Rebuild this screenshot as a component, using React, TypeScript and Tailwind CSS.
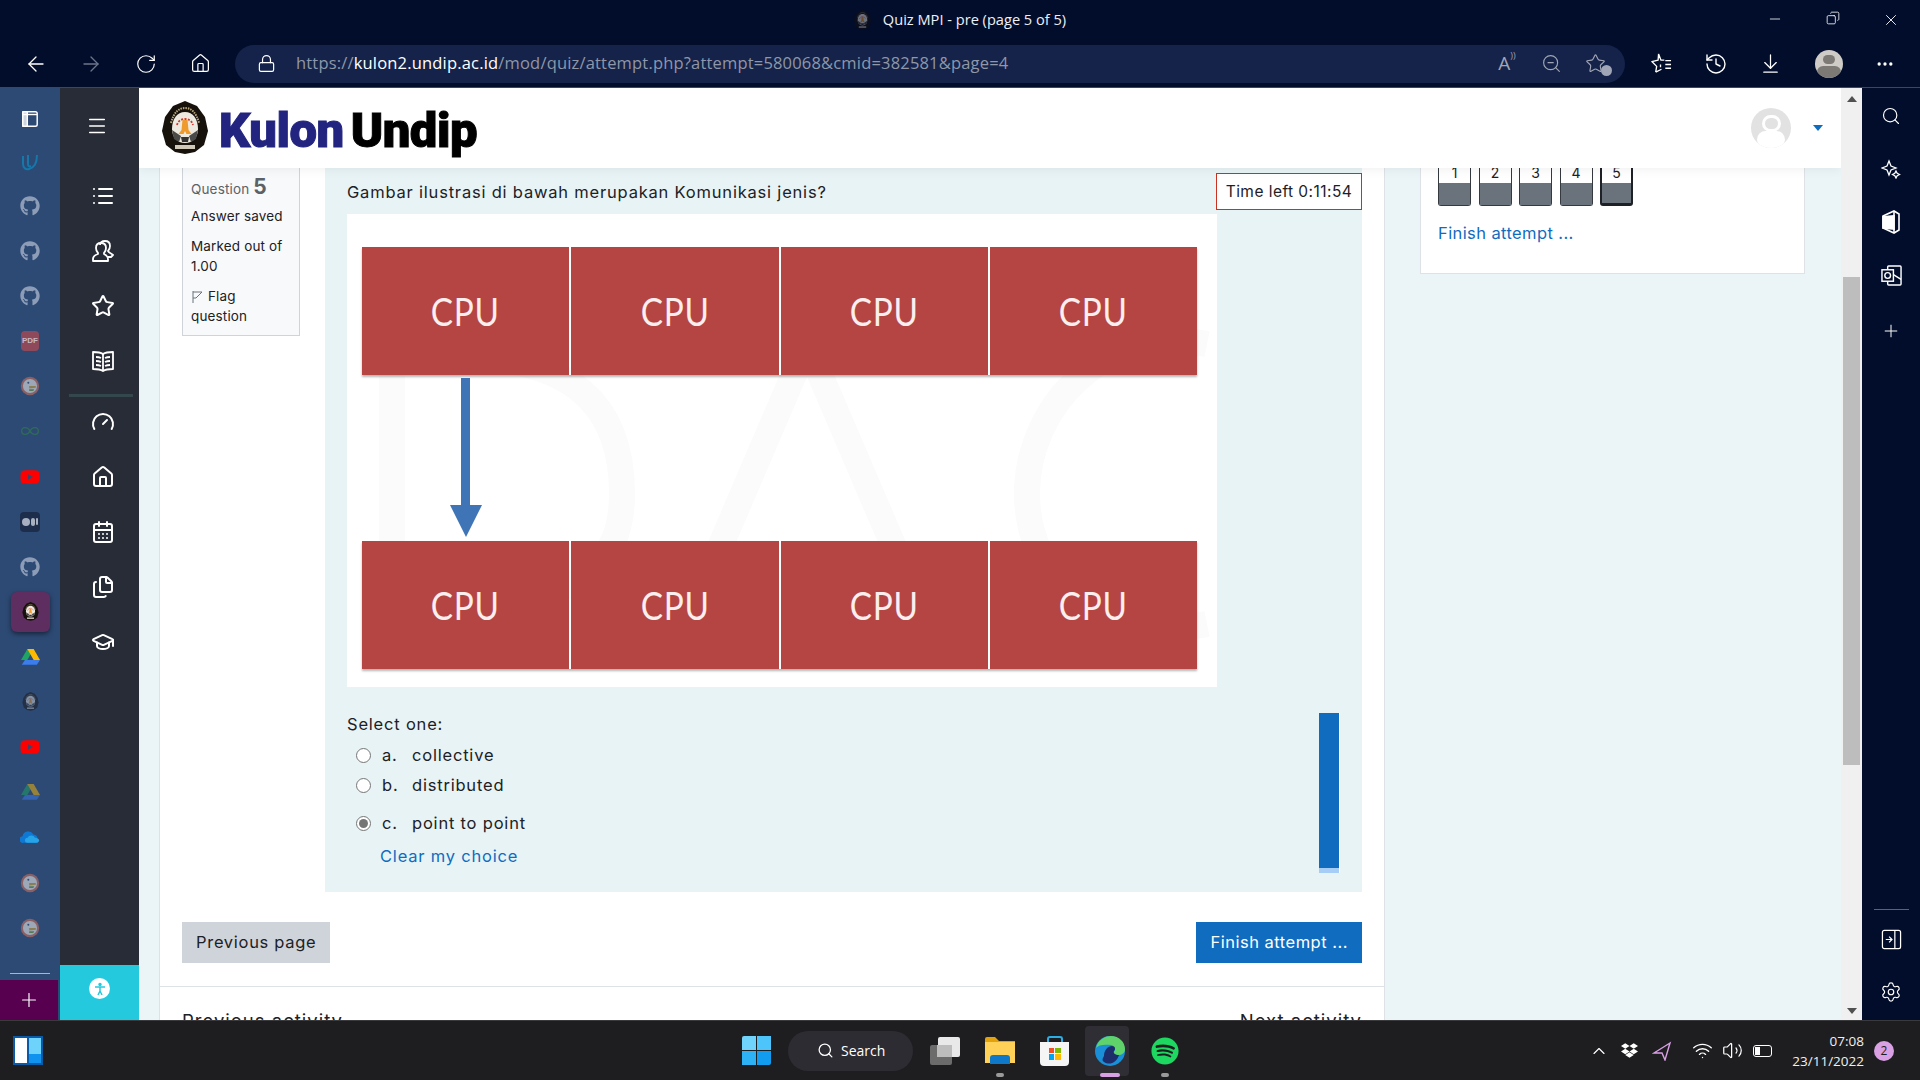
import {
  ArrowDownToLine,
  ArrowLeft,
  ArrowRight,
  CalendarDays,
  ChevronUp,
  Copy,
  Ellipsis,
  Files,
  Gauge,
  GraduationCap,
  History,
  Home,
  List,
  Lock,
  Menu,
  Minus,
  Plus,
  RotateCw,
  Search,
  Settings,
  Star,
  Volume2,
  Wifi,
  X,
  ZoomOut,
} from "lucide-react";
import { FaDropbox, FaGithub, FaSpotify, FaYoutube } from "react-icons/fa";

const Emblem = ({ className = "", dim = false }: { className?: string; dim?: boolean }) => (
  <svg viewBox="0 0 46 54" className={className} style={{ opacity: dim ? 0.45 : 1 }}>
    <path d="M23 0 35 5l8 11 3 14-4 14-9 7-10 2-10-2-9-7-4-14 3-14 8-11Z" fill="#17110c" />
    <path d="M9 22C12 11 17 7 23 7s11 4 14 15" fill="none" stroke="#b9a77c" strokeWidth="2" strokeDasharray="1.5 1" />
    <path d="M23 11c8 0 13 7 13 17 0 8-5 14-13 14S10 36 10 28c0-10 5-17 13-17Z" fill="#efeadf" />
    <path d="M15 24c2-8 14-8 16 0" fill="none" stroke="#d8352a" strokeWidth="1.8" strokeDasharray="2 1.4" />
    <path d="M20.5 19h5l1 10 3 4h-5l-1.5-3-1.5 3h-5l3-4Z" fill="#ef9a2d" />
    <path d="M10 29l9 6-2 6-5-3ZM36 29l-9 6 2 6 5-3Z" fill="#4a4a48" />
    <path d="M19 36h8l-1 5h-6Z" fill="#333" />
    <rect x="13" y="44" width="20" height="4" fill="#cfc8b8" />
  </svg>
);

const Duck = () => (
  <svg viewBox="0 0 24 24" className="w-[20px] h-[20px] opacity-60">
    <circle cx="12" cy="12" r="11" fill="#c9705c" />
    <circle cx="12" cy="12" r="8.5" fill="#e6e6e6" />
    <path d="M11 12h8v2l-8 1Z" fill="#c9a23c" />
    <path d="M11 16h6l-1 2h-5Z" fill="#6b9a4a" />
    <circle cx="10" cy="8" r="1.2" fill="#34507a" />
  </svg>
);

const Drive = ({ dim = false }: { dim?: boolean }) => (
  <svg viewBox="0 0 24 21" className={dim ? "w-[19px] h-[17px] opacity-50" : "w-[19px] h-[17px]"}>
    <path d="M8 1h8L8 15H0Z" fill="#1fa463" />
    <path d="M16 1l8 14h-8L8 1Z" fill="#ffba00" />
    <path d="M5 15h19l-4 6H1Z" fill="#3b7ded" />
  </svg>
);

const railItems: { h: number; node: React.ReactNode }[] = [
  { h: 43, node: <svg viewBox="0 0 20 20" className="w-[18px] h-[18px]" fill="none" stroke="#fff" strokeWidth="1.6"><rect x="2" y="2" width="16" height="16" rx="2" /><rect x="2" y="2" width="5" height="16" fill="#cdd5df" /><path d="M2 5h16" /></svg> },
  { h: 44, node: <svg viewBox="0 0 20 20" className="w-[20px] h-[20px]" fill="none" stroke="#1677a8" strokeWidth="2"><path d="M3 4v8c0 4 3 6 6 5 4-1 8-5 8-14" /><path d="M8 3v9c0 2 1 3 3 2" /></svg> },
  { h: 44, node: <FaGithub className="w-[20px] h-[20px] text-[#8d9db8]" /> },
  { h: 45, node: <FaGithub className="w-[20px] h-[20px] text-[#8d9db8]" /> },
  { h: 45, node: <FaGithub className="w-[20px] h-[20px] text-[#8d9db8]" /> },
  { h: 45, node: <div className="w-[18px] h-[20px] flex items-center justify-center rounded-sm bg-[#8e4a5a] text-[8px] font-bold text-[#c9b8c4] font-['Liberation_Sans',sans-serif]">PDF</div> },
  { h: 45, node: <Duck /> },
  { h: 46, node: <svg viewBox="0 0 24 12" className="w-[20px] h-[10px]" fill="none" stroke="#2f6b58" strokeWidth="1.6"><path d="M12 6c-3-6-10-5-10 0s7 6 10 0c3 6 10 5 10 0s-7-6-10 0Z" /></svg> },
  { h: 45, node: <FaYoutube className="w-[20px] h-[20px] text-[#ff0000]" /> },
  { h: 45, node: <div className="w-[20px] h-[20px] flex items-center justify-center gap-px rounded-sm bg-[#1d2e4d]"><span className="w-[8px] h-[8px] rounded-full bg-[#a7b0c0]" /><span className="w-[4px] h-[8px] rounded-full bg-[#a7b0c0]" /><span className="w-[2px] h-[7px] rounded-full bg-[#a7b0c0]" /></div> },
  { h: 45, node: <FaGithub className="w-[20px] h-[20px] text-[#8d9db8]" /> },
  { h: 45, node: <div className="w-[39px] h-[40px] flex items-center justify-center rounded-md bg-[#5d2e5f] shadow-[0_2px_5px_rgba(0,0,0,0.5)]"><Emblem className="w-[17px] h-[19px]" /></div> },
  { h: 45, node: <Drive /> },
  { h: 45, node: <Emblem dim className="w-[17px] h-[19px]" /> },
  { h: 45, node: <FaYoutube className="w-[20px] h-[20px] text-[#ff0000]" /> },
  { h: 45, node: <Drive dim /> },
  { h: 46, node: <svg viewBox="0 0 24 14" className="w-[20px] h-[12px]"><path d="M4 14a4 4 0 0 1-1-8 7 7 0 0 1 13-2 5 5 0 0 1 5 6 3 3 0 0 1 0 4Z" fill="#0f78d4" /><path d="M9 14a3 3 0 0 1 0-6 5 5 0 0 1 9 0c3 0 5 2 5 3s-1 3-3 3Z" fill="#27a3e8" /></svg> },
  { h: 45, node: <Duck /> },
  { h: 45, node: <Duck /> },
];

const navTop = [
  <List key="list" className="w-[24px] h-[24px]" />,
  <svg key="users" viewBox="0 0 24 24" className="w-[24px] h-[24px]" fill="none" stroke="currentColor" strokeWidth="1.8" strokeLinejoin="round">
    <path d="M9 6c0-3 2-4 5-4s5 2 5 5c0 2-1 4-2 5 1 2 3 2 5 4l-2 2h-3" />
    <path d="M5 9c0-3 2-5 5-5s5 2 5 5c0 2-1 4-2 5v1c2 1 4 2 4 5v2H2v-2c0-3 2-4 5-5v-1C6 13 5 11 5 9Z" />
  </svg>,
  <Star key="star" className="w-[24px] h-[24px]" />,
  <svg key="book" viewBox="0 0 24 24" className="w-[24px] h-[24px]" fill="none" stroke="currentColor" strokeWidth="1.8" strokeLinejoin="round">
    <path d="M12 5C9 3 6 3 2 3v17c4 0 7 0 10 2 3-2 6-2 10-2V3c-4 0-7 0-10 2Z" />
    <path d="M12 5v17M5 8c2 0 4 .5 5 1M5 12c2 0 4 .5 5 1M5 16c2 0 4 .5 5 1M19 8c-2 0-4 .5-5 1M19 12c-2 0-4 .5-5 1M19 16c-2 0-4 .5-5 1" />
  </svg>,
];

const navBottom = [
  <Gauge key="gauge" className="w-[24px] h-[24px]" />,
  <Home key="home" className="w-[24px] h-[24px]" />,
  <CalendarDays key="cal" className="w-[24px] h-[24px]" />,
  <Files key="files" className="w-[24px] h-[24px]" />,
  <GraduationCap key="cap" className="w-[24px] h-[24px]" />,
];

const CpuRow = () => (
  <div className="flex gap-[2px] shadow-[0_2px_2px_rgba(120,120,120,0.55)]">
    {[0, 1, 2, 3].map((i) => (
      <div key={i} className="flex-1 h-[128px] flex items-center justify-center bg-[#b54543] text-[#fbeeee] text-[37px] font-['Lato',sans-serif]">
        <span className="scale-x-[0.9] scale-y-[1.06]">CPU</span>
      </div>
    ))}
  </div>
);

const Option = ({ letter, text, checked, className = "" }: { letter: string; text: string; checked?: boolean; className?: string }) => (
  <div className={`flex items-center h-[30px] pl-[9px] ${className}`}>
    <span className="w-[15px] h-[15px] rounded-full border border-[#767676] bg-white flex items-center justify-center">
      {checked && <span className="w-[9px] h-[9px] rounded-full bg-[#767676]" />}
    </span>
    <span className="ml-[11px] w-[30px]">{letter}</span>
    <span>{text}</span>
  </div>
);

export default function App() {
  return (
    <div className="w-[1920px] h-[1080px] flex flex-col overflow-hidden bg-[#020d2b] font-['Inter',sans-serif]">
      {/* title bar */}
      <div className="h-[44px] pb-[4px] flex items-center text-white">
        <div className="flex-1" />
        <div className="flex items-center gap-[12px] text-[14.6px] font-['Open_Sans',sans-serif] text-[#eef0f4]">
          <Emblem dim className="w-[17px] h-[20px]" />
          Quiz MPI - pre (page 5 of 5)
        </div>
        <div className="flex-1 flex justify-end">
          <div className="w-[58px] flex justify-center"><Minus className="w-[16px] h-[16px]" strokeWidth={1.2} /></div>
          <div className="w-[58px] flex justify-center"><Copy className="w-[14px] h-[14px] -scale-x-100" strokeWidth={1.4} /></div>
          <div className="w-[58px] flex justify-center"><X className="w-[18px] h-[18px]" strokeWidth={1.2} /></div>
        </div>
      </div>

      {/* address bar */}
      <div className="h-[43px] flex items-center pb-[4px] pl-[8px] text-white">
        <div className="w-[55px] flex justify-center"><ArrowLeft className="w-[24px] h-[24px]" strokeWidth={1.3} /></div>
        <div className="w-[55px] flex justify-center"><ArrowRight className="w-[24px] h-[24px] text-[#6e7689]" strokeWidth={1.3} /></div>
        <div className="w-[55px] flex justify-center"><RotateCw className="w-[22px] h-[22px]" strokeWidth={1.3} /></div>
        <div className="w-[55px] flex justify-center"><Home className="w-[21px] h-[21px]" strokeWidth={1.4} /></div>
        <div className="ml-[7px] w-[1390px] h-[38px] flex items-center rounded-full bg-[#15234a] pl-[22px] pr-[8px]">
          <Lock className="w-[19px] h-[21px]" strokeWidth={1.5} />
          <div className="ml-[20px] flex-1 text-[16.5px] tracking-[0.18px] font-['Open_Sans',sans-serif] text-[#8f97a8]">
            https://<span className="text-white">kulon2.undip.ac.id</span>/mod/quiz/attempt.php?attempt=580068&amp;cmid=382581&amp;page=4
          </div>
          <div className="w-[44px] flex justify-center text-[19px] text-[#a0a6b5] font-['Open_Sans',sans-serif]">A<span className="text-[9px]">))</span></div>
          <div className="w-[44px] flex justify-center"><ZoomOut className="w-[21px] h-[21px] text-[#a0a6b5]" strokeWidth={1.3} /></div>
          <div className="w-[44px] flex justify-center relative"><Star className="w-[21px] h-[21px] text-[#a0a6b5]" strokeWidth={1.3} /><span className="absolute right-[5px] -bottom-[2px] w-[11px] h-[11px] rounded-full bg-[#a0a6b5]" /></div>
        </div>
        <div className="ml-[8px] w-[55px] flex justify-center">
          <svg viewBox="0 0 24 24" className="w-[23px] h-[23px]" fill="none" stroke="currentColor" strokeWidth="1.4" strokeLinejoin="round">
            <path d="M10 2l2.5 6.500H16M12 13v3M7 21l1-6-5-5 6.500-1.500L10 2M7 21l6-3" />
            <path d="M17 9h6M17 13h6M17 17h6" />
          </svg>
        </div>
        <div className="w-[55px] flex justify-center"><History className="w-[24px] h-[24px]" strokeWidth={1.4} /></div>
        <div className="w-[55px] flex justify-center"><ArrowDownToLine className="w-[23px] h-[23px]" strokeWidth={1.3} /></div>
        <div className="w-[62px] flex justify-center">
          <div className="w-[28px] h-[28px] rounded-full bg-[#cfccc8] overflow-hidden flex flex-col items-center">
            <div className="mt-[5px] w-[12px] h-[12px] rounded-full bg-[#7d7a76]" />
            <div className="mt-[2px] w-[24px] h-[14px] rounded-full bg-[#7d7a76]" />
          </div>
        </div>
        <div className="w-[50px] flex justify-center"><Ellipsis className="w-[20px] h-[20px]" /></div>
      </div>

      <div className="flex-1 min-h-0 flex border-t border-[#3d4660]">
        {/* vertical tabs */}
        <div className="w-[60px] relative flex flex-col items-center overflow-hidden bg-[#2d4a75] pt-[9px]">
          {railItems.map((item, i) => (
            <div key={i} className="w-full flex items-center justify-center shrink-0" style={{ height: item.h }}>
              {item.node}
            </div>
          ))}
          <div className="absolute bottom-0 left-0 right-0 h-[47px] bg-[#2d4a75]">
            <div className="mx-[10px] h-px bg-[#a9b6c8]" />
            <div className="mt-[6px] w-[58px] h-[40px] flex items-center justify-center bg-[#56004f]">
              <Plus className="w-[22px] h-[22px] text-white" strokeWidth={1.3} />
            </div>
          </div>
        </div>

        {/* moodle nav */}
        <div className="w-[79px] flex flex-col bg-[#282c36] text-white">
          <div className="h-[76px] pl-[26px] flex items-center"><Menu className="w-[22px] h-[22px]" strokeWidth={1.6} /></div>
          <div className="mt-[4px]">
            {navTop.map((icon, i) => (
              <div key={i} className="h-[55px] flex items-center justify-center pl-[7px]">{icon}</div>
            ))}
          </div>
          <div className="mt-[6px] ml-[9px] w-[64px] h-[3px] bg-[#34474d]" />
          <div className="mt-[-3px]">
            {navBottom.map((icon, i) => (
              <div key={i} className="h-[55px] flex items-center justify-center pl-[7px]">{icon}</div>
            ))}
          </div>
          <div className="mt-auto h-[55px] pt-[13px] flex justify-center bg-[#25c9de]">
            <div className="w-[21px] h-[21px] rounded-full bg-white flex items-center justify-center text-[#25c9de]">
              <svg viewBox="0 0 16 16" className="w-[16px] h-[16px]" fill="none" stroke="currentColor" strokeWidth="1.5"><circle cx="8" cy="3.5" r="1" fill="currentColor" /><path d="M3 6h10M8 6v4l-2 4M8 10l2 4" /></svg>
            </div>
          </div>
        </div>

        {/* page */}
        <div className="flex-1 min-w-0 flex flex-col bg-[#ebf4f7] overflow-hidden">
          <header className="relative z-10 h-[80px] shrink-0 flex items-center bg-white pl-[23px] shadow-[0_2px_10px_rgba(0,0,0,0.06)]">
            <Emblem className="w-[46px] h-[54px]" />
            <div className="ml-[11px] mt-[5px] flex gap-[7px] text-[49px] leading-none font-black tracking-[-0.5px] font-['Roboto',sans-serif] [-webkit-text-stroke:1px_currentColor]">
              <span className="text-[#22247f]">Kulon</span>
              <span className="text-black">Undip</span>
            </div>
            <div className="ml-auto w-[40px] h-[40px] rounded-full bg-[#e2e2e2] overflow-hidden flex flex-col items-center">
              <div className="mt-[7px] w-[19px] h-[19px] rounded-full border-[3px] border-white bg-[#e2e2e2]" />
              <div className="mt-[-1px] w-[28px] h-[20px] rounded-full bg-white" />
            </div>
            <div className="ml-[22px] mr-[18px] w-0 h-0 border-x-[5px] border-x-transparent border-t-[6px] border-t-[#0f6cbf]" />
          </header>

          <div className="flex-1 min-h-0 flex pl-[20px] overflow-hidden">
            {/* main card */}
            <div className="w-[1226px] shrink-0 flex flex-col bg-white border-x border-[#dee2e6] px-[22px] text-[#1d2125]">
              <div className="flex gap-[25px]">
                <div className="w-[118px] h-[168px] shrink-0 bg-[#f8f9fa] border border-t-0 border-[#cfd4da] px-[8px] text-[13.5px] tracking-[0.15px] leading-[20px] text-[#1d2125]">
                  <div className="mt-[9px] h-[22px] flex items-baseline gap-[4px] text-[#5a6268]">
                    Question <span className="text-[21px] font-bold">5</span>
                  </div>
                  <div className="mt-[7px]">Answer saved</div>
                  <div className="mt-[10px]">Marked out of 1.00</div>
                  <div className="mt-[10px]">
                    <svg viewBox="0 0 12 14" className="inline w-[12px] h-[14px] mr-[5px] text-[#6a737b]" fill="none" stroke="currentColor" strokeWidth="1"><path d="M2 1v12M2 2h9L5 8H2" /></svg>
                    Flag question
                  </div>
                </div>

                <div className="flex-1 min-w-0 h-[724px] flex flex-col bg-[#e7f3f5] text-[16.5px] tracking-[0.8px]">
                  <div className="mt-[5px] h-[37px] flex items-center justify-between pl-[22px]">
                    <span className="pt-[2px]">Gambar ilustrasi di bawah merupakan Komunikasi jenis?</span>
                    <span className="w-[146px] h-[37px] flex items-center justify-center bg-white border border-[#ca3120] text-[15.5px] tracking-[0.45px]">Time left 0:11:54</span>
                  </div>

                  <div className="relative mt-[4px] ml-[22px] w-[870px] h-[473px] bg-white pt-[33px] pl-[15px] pr-[20px]">
                    <svg viewBox="0 0 870 473" className="absolute inset-0 w-full h-full" fill="none" stroke="#fbfbfb" strokeWidth="26">
                      <path d="M45 150v250M45 150c200-30 230 60 230 130s-40 120-230 120" />
                      <path d="M340 410 460 130l120 280" />
                      <path d="M860 130c-100-20-180 60-180 150s80 150 180 130" />
                    </svg>
                    <div className="relative">
                      <CpuRow />
                      <svg viewBox="0 0 32 159" className="ml-[88px] w-[32px] h-[159px] mt-[3px] mb-[4px]">
                        <rect x="11" y="0" width="9" height="127" fill="#3f74b6" />
                        <path d="M0 127h32L16 159Z" fill="#3f74b6" />
                      </svg>
                      <CpuRow />
                    </div>
                  </div>

                  <div className="mt-[25px] flex justify-between pl-[22px] pr-[22px]">
                    <div>
                      <div className="h-[24px] leading-[24px]">Select one:</div>
                      <Option letter="a." text="collective" className="mt-[4px]" />
                      <Option letter="b." text="distributed" />
                      <Option letter="c." text="point to point" checked className="mt-[8px]" />
                      <div className="mt-[6px] pl-[33px] h-[24px] leading-[24px] text-[#0f6cbf]">Clear my choice</div>
                    </div>
                    <div className="mt-[1px] w-[21px] h-[160px] border-r border-white flex flex-col">
                      <div className="flex-1 bg-[#0f6cbf]" />
                      <div className="h-[5px] bg-[#a6cdf5]" />
                    </div>
                  </div>
                </div>
              </div>

              <div className="mt-[30px] flex justify-between text-[16.5px]">
                <div className="h-[41px] px-[14px] flex items-center tracking-[0.7px] bg-[#ced4da]">Previous page</div>
                <div className="h-[41px] px-[14px] flex items-center tracking-[0.5px] bg-[#0f6cbf] text-white">Finish attempt ...</div>
              </div>
              <div className="mt-[23px] -mx-[22px] border-t border-[#dee2e6]" />
              <div className="mt-[21px] flex justify-between text-[18.5px] tracking-[1px]">
                <span>Previous activity</span>
                <span>Next activity</span>
              </div>
            </div>

            {/* quiz navigation */}
            <div className="ml-[35px] w-[385px] h-[106px] bg-white border border-t-0 border-[#dee2e6] pl-[17px]">
              <div className="flex gap-[7.5px]">
                {[1, 2, 3, 4, 5].map((n) => (
                  <div key={n} className={n === 5 ? "w-[33px] h-[38px] flex flex-col rounded-b-[3px] border-x-2 border-b-[3px] border-[#1d2125] bg-white" : "w-[33px] h-[38px] flex flex-col rounded-b-[3px] border-x border-b border-[#343a40] bg-white"}>
                    <div className="h-[15px] text-center text-[14px] leading-[9px] text-[#1d2125]">{n}</div>
                    <div className="flex-1 bg-[#6a737b]" />
                  </div>
                ))}
              </div>
              <div className="mt-[15px] text-[16.5px] tracking-[0.4px] text-[#0f6cbf]">Finish attempt ...</div>
            </div>
          </div>
        </div>

        {/* scrollbar */}
        <div className="w-[21px] flex flex-col items-center bg-[#f0f0f0]">
          <div className="mt-[8px] w-0 h-0 border-x-[5px] border-x-transparent border-b-[6px] border-b-[#505050]" />
          <div className="mt-[175px] w-[17px] h-[488px] bg-[#bdbdbd]" />
          <div className="mt-auto mb-[6px] w-0 h-0 border-x-[5px] border-x-transparent border-t-[6px] border-t-[#505050]" />
        </div>

        {/* edge sidebar */}
        <div className="w-[58px] flex flex-col items-center text-white pb-[4px]">
          <div className="h-[53px] mt-[1px] flex items-center"><Search className="w-[20px] h-[20px]" strokeWidth={1.4} /></div>
          <div className="h-[53px] flex items-center">
            <svg viewBox="0 0 20 20" className="w-[20px] h-[20px]" fill="none" stroke="currentColor" strokeWidth="1.3"><path d="M8 2l2 5 5 2-5 2-2 5-2-5-5-2 5-2Z" /><path d="M15 12l1.2 2.3 2.3 1.2-2.3 1.2L15 19l-1.2-2.3-2.3-1.2 2.3-1.2Z" /></svg>
          </div>
          <div className="h-[53px] flex items-center">
            <svg viewBox="0 0 20 24" className="w-[20px] h-[24px]" fill="none" stroke="currentColor" strokeWidth="1.6"><path d="M2 6 13 1l5 3v16l-5 3-11-5Z" /><path d="M13 1v22" /><path d="M2 6v12l11 1V5" fill="currentColor" /></svg>
          </div>
          <div className="h-[55px] flex items-center">
            <svg viewBox="0 0 22 22" className="w-[21px] h-[21px]" fill="none" stroke="currentColor" strokeWidth="1.5"><rect x="7" y="1" width="14" height="20" rx="1" /><rect x="1" y="5" width="12" height="12" fill="#020d2b" /><circle cx="7" cy="11" r="3" /><path d="M13 10l8 5" /></svg>
          </div>
          <div className="h-[55px] flex items-center"><Plus className="w-[20px] h-[20px]" strokeWidth={1.2} /></div>
          <div className="mt-auto w-[35px] h-px bg-[#59627a]" />
          <div className="h-[58px] flex items-center">
            <svg viewBox="0 0 22 22" className="w-[21px] h-[21px]" fill="none" stroke="currentColor" strokeWidth="1.3"><rect x="1.5" y="1.5" width="19" height="19" rx="2" /><path d="M14.5 1.5v19M5 11h6M8.5 8l3 3-3 3" /></svg>
          </div>
          <div className="h-[48px] flex items-center"><Settings className="w-[22px] h-[22px]" strokeWidth={1.3} /></div>
        </div>
      </div>

      {/* taskbar */}
      <div className="h-[60px] shrink-0 flex items-center border-t border-[#3a3a3c] bg-[#1e1e20] text-white">
        <div className="ml-[13px] w-[30px] h-[29px] flex gap-[2px] p-[2px] bg-[#0a5aa8]">
          <div className="flex-1 bg-white" />
          <div className="flex-1 flex flex-col">
            <div className="flex-1 bg-[#6dd3fb]" />
            <div className="h-[9px] bg-[#0f93ee]" />
          </div>
        </div>

        <div className="ml-[699px] w-[29px] h-[29px] grid grid-cols-2 gap-[1px]">
          <div className="rounded-tl-[2px] bg-[#6fd3fb]" />
          <div className="bg-[#4ec5fa]" />
          <div className="bg-[#2cb2f5]" />
          <div className="rounded-br-[2px] bg-[#129cf0]" />
        </div>
        <div className="ml-[17px] w-[125px] h-[40px] rounded-full bg-[#2c2c32] flex items-center pl-[29px] gap-[7px] text-[14px] font-['Open_Sans',sans-serif]">
          <Search className="w-[17px] h-[17px]" strokeWidth={1.8} />
          Search
        </div>
        <div className="ml-[17px] w-[30px] h-[28px] relative">
          <div className="absolute left-0 bottom-0 w-[22px] h-[20px] rounded-[2px] bg-[#6b6b6b]" />
          <div className="absolute right-0 top-0 w-[22px] h-[20px] rounded-[2px] bg-[#e9e9e9]" />
          <div className="absolute left-[7px] top-[8px] w-[15px] h-[12px] bg-[#bdbdbd]" />
        </div>
        <div className="ml-[25px] w-[30px] relative">
          <svg viewBox="0 0 30 27" className="w-[30px] h-[27px]">
            <path d="M0 2a2 2 0 0 1 2-2h8l4 4h16v21H0Z" fill="#e1a20e" />
            <path d="M0 5h30v21H0Z" fill="#ffd257" />
            <path d="M5 21a3 3 0 0 1 3-3h14a3 3 0 0 1 3 3v6H5Z" fill="#0f78c9" />
          </svg>
          <div className="absolute left-[11px] top-[36px] w-[8px] h-[4px] rounded-full bg-[#9a9a9a]" />
        </div>
        <div className="ml-[25px] w-[29px] h-[30px] flex flex-col">
          <div className="mx-auto h-[6px] w-[16px] border-2 border-b-0 border-[#29aee6] rounded-t-[3px]" />
          <div className="flex-1 rounded-b-[4px] bg-[#f5f5f5] flex items-center justify-center">
            <div className="w-[12px] h-[12px] grid grid-cols-2 gap-px">
              <div className="bg-[#f25022]" />
              <div className="bg-[#7fba00]" />
              <div className="bg-[#00a4ef]" />
              <div className="bg-[#ffb900]" />
            </div>
          </div>
        </div>
        <div className="ml-[16px] w-[44px] h-[50px] relative flex items-center pl-[10px] rounded-[4px] bg-[#2e2e34]">
          <svg viewBox="0 0 30 30" className="w-[30px] h-[30px]">
            <circle cx="15" cy="15" r="15" fill="#1a8fd8" />
            <path d="M1 12C3 3 11 0 16 0c8 0 14 6 14 13 0 4-3 6-7 6-3 0-5-1-5-3 3-1 3-6-2-7C9 8 3 9 1 12Z" fill="#5fd36a" />
            <path d="M9 20c0-6 4-10 8-10 3 0 4 3 2 5-1 2 1 4 5 4-2 7-9 11-15 7-2-1-2-3 0-6Z" fill="#1d2d6b" />
          </svg>
          <div className="absolute bottom-[-1px] left-[15px] w-[20px] h-[4px] rounded-full bg-[#d9a0e4]" />
        </div>
        <div className="ml-[22px] w-[28px] relative">
          <FaSpotify className="w-[28px] h-[28px] text-[#1ed760]" />
          <div className="absolute left-[10px] top-[36px] w-[8px] h-[4px] rounded-full bg-[#9a9a9a]" />
        </div>

        <ChevronUp className="ml-[410px] w-[20px] h-[20px]" strokeWidth={1.4} />
        <FaDropbox className="ml-[12px] w-[17px] h-[17px]" />
        <svg viewBox="0 0 20 20" className="ml-[14px] w-[20px] h-[20px]" fill="none" stroke="#d9a0e4" strokeWidth="1.4"><path d="M18 2 2 12l8 0 3 7Z" /></svg>
        <Wifi className="ml-[20px] w-[21px] h-[21px]" strokeWidth={1.6} />
        <Volume2 className="ml-[9px] w-[21px] h-[21px]" strokeWidth={1.4} />
        <div className="ml-[10px] w-[19px] h-[12px] rounded-[3px] border border-white p-[1px] flex">
          <div className="w-[5px] bg-white" />
        </div>
        <div className="ml-[15px] w-[77px] text-right text-[13.5px] leading-[20px] font-['Open_Sans',sans-serif] text-[#f0f0f0]">
          <div>07:08</div>
          <div>23/11/2022</div>
        </div>
        <div className="ml-[10px] w-[20px] h-[20px] rounded-full bg-[#d9a0e4] flex items-center justify-center text-[12px] text-[#1e1e20] font-['Open_Sans',sans-serif]">2</div>
      </div>
    </div>
  );
}
